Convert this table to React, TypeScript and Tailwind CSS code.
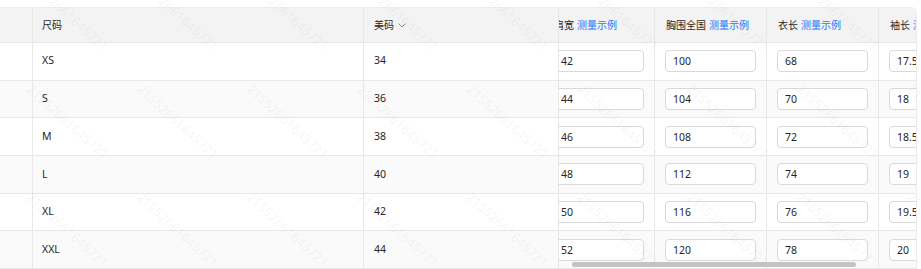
import React from 'react';

interface SizeRow {
  size: string;
  us: string;
  shoulder: string;
  chest: string;
  length: string;
  sleeve: string;
}

const rows: SizeRow[] = [
  { size: 'XS', us: '34', shoulder: '42', chest: '100', length: '68', sleeve: '17.5' },
  { size: 'S', us: '36', shoulder: '44', chest: '104', length: '70', sleeve: '18' },
  { size: 'M', us: '38', shoulder: '46', chest: '108', length: '72', sleeve: '18.5' },
  { size: 'L', us: '40', shoulder: '48', chest: '112', length: '74', sleeve: '19' },
  { size: 'XL', us: '42', shoulder: '50', chest: '116', length: '76', sleeve: '19.5' },
  { size: 'XXL', us: '44', shoulder: '52', chest: '120', length: '78', sleeve: '20' },
];

const measureCols = [
  { key: 'shoulder', label: '肩宽' },
  { key: 'chest', label: '胸围全国' },
  { key: 'length', label: '衣长' },
  { key: 'sleeve', label: '袖长' },
] as const;

const rowBg = (i: number) => (i % 2 === 1 ? 'bg-[#fafafa]' : 'bg-white');

const Watermark: React.FC = () => {
  const cells = [];
  for (let r = 0; r < 4; r++) {
    for (let c = 0; c < 9; c++) {
      cells.push(
        <div key={`${r}-${c}`} className="relative w-[110px] h-[108px]">
          <span className="absolute left-0 top-0 origin-top-left rotate-[42deg] whitespace-nowrap text-[13px] text-black/[0.06]">
            21552661645721
          </span>
        </div>
      );
    }
  }
  return (
    <div className="pointer-events-none absolute inset-0 overflow-hidden">
      <div className="ml-[35px] mt-[-28px] flex w-[990px] flex-wrap">{cells}</div>
    </div>
  );
};

export default function App() {
  return (
    <div
      className="relative h-[269px] w-[921px] overflow-hidden bg-white pr-[4px] pt-[7px] text-[#262626]"
      style={{ fontFamily: '"Noto Sans", "Noto Sans CJK SC", sans-serif' }}
    >
      <div className="relative flex overflow-hidden rounded-tr-[6px] border-r border-t border-[#ececec] text-[10.5px]">
        {/* fixed columns */}
        <div className="w-[559px] shrink-0 border-r border-[#e6e6e6]">
          <div className="flex h-[35px] border-b border-[#e8e8e8] bg-[#f3f3f3] text-[10px]">
            <div className="w-[33px] border-r border-[#e8e8e8]" />
            <div className="flex w-[331px] items-center border-r border-[#e8e8e8] pl-[9px]">尺码</div>
            <div className="flex flex-1 items-center gap-[4px] pl-[10px]">
              美码
              <svg width="8" height="5" viewBox="0 0 8 5" className="mt-[1px]">
                <path d="M0.5 0.5 L4 4 L7.5 0.5" fill="none" stroke="#8c8c8c" strokeWidth="1" />
              </svg>
            </div>
          </div>
          {rows.map((r, i) => (
            <div key={r.size} className={`flex h-[37.7px] border-b border-[#e8e8e8] ${rowBg(i)}`}>
              <div className="w-[33px] border-r border-[#e8e8e8]" />
              <div className="flex w-[331px] items-center border-r border-[#e8e8e8] pl-[9px]">{r.size}</div>
              <div className="flex flex-1 items-center pl-[10px]">{r.us}</div>
            </div>
          ))}
        </div>

        {/* scrolled columns */}
        <div className="relative min-w-0 flex-1 overflow-hidden">
          <div className="ml-[-16px] w-[448px]">
            <div className="flex h-[35px] border-b border-[#e8e8e8] bg-[#f3f3f3] text-[10px]">
              {measureCols.map((c) => (
                <div
                  key={c.key}
                  className="flex w-[112px] shrink-0 items-center gap-[3px] whitespace-nowrap border-r border-[#e8e8e8] pl-[11px]"
                >
                  <span>{c.label}</span>
                  <span className="text-[#1677ff]">测量示例</span>
                </div>
              ))}
            </div>
            {rows.map((r, i) => (
              <div key={r.size} className={`flex h-[37.7px] border-b border-[#e8e8e8] ${rowBg(i)}`}>
                {measureCols.map((c) => (
                  <div key={c.key} className="flex w-[112px] shrink-0 items-center border-r border-[#e8e8e8] pl-[10px]">
                    <input
                      readOnly
                      value={r[c.key]}
                      className="h-[22px] w-[91px] rounded-[4px] border border-[#d9d9d9] bg-white px-[7px] text-[10.5px] text-[#262626] outline-none"
                    />
                  </div>
                ))}
              </div>
            ))}
          </div>
          <div className="absolute bottom-[2px] left-[13px] h-[5px] w-[284px] rounded-full bg-[#c4c4c4]" />
        </div>
      </div>
      <Watermark />
    </div>
  );
}
